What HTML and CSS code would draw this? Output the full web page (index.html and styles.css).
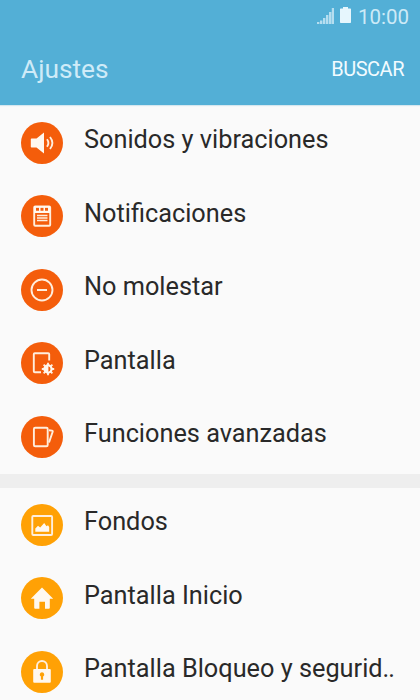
FILE: index.html
```html
<!DOCTYPE html>
<html lang="es">
<head>
    <meta charset="UTF-8">
    <meta name="viewport" content="width=device-width, initial-scale=1.0">
    <title>Ajustes</title>
    <link rel="stylesheet" href="styles.css">
</head>
<body>
    <header class="header">
        <div class="status-bar">
            <svg class="signal" width="17" height="16" viewBox="0 0 17 16">
                <path d="M0 14h2.400v2H0zM3 12.500h2.400V16H3zM6 10h2.400v6H6zM9 7h2.400v9H9zM12 4h2.400v12H12zM14.800 0H17v16h-2.200z"/>
            </svg>
            <svg class="battery" width="11" height="17" viewBox="0 0 11 17">
                <path d="M3 0h5v1.400h2.300q.7 0 .7.7v13.200q0 .7-.7.7H.7q-.7 0-.7-.7V2.100q0-.7.7-.7H3z"/>
            </svg>
            <span class="clock">10:00</span>
        </div>
        <div class="action-bar">
            <h1 class="title">Ajustes</h1>
            <button type="button" class="search-btn">BUSCAR</button>
        </div>
    </header>

    <main>
        <ul class="group device">
            <li class="item">
                <svg class="icon" viewBox="0 0 42 42">
                    <path class="fill" d="M10.500 16.500h5l7.500-6v21l-7.500-6h-5q-.7 0-.7-.7v-7.600q0-.7.7-.7z"/>
                    <path class="line" d="M26 17.300q2.800 3.700 0 7.400M29 15q4.800 6 0 12"/>
                </svg>
                <span class="label">Sonidos y vibraciones</span>
            </li>
            <li class="item">
                <svg class="icon" viewBox="0 0 42 42">
                    <rect class="line" x="13.200" y="11.500" width="16" height="19.200" rx="1"/>
                    <path class="fill" fill-rule="evenodd" d="M13 11h16v7H13zM15 12.800v3H18V12.800zM19.500 12.800v3h3v-3zM24 12.800v3h3v-3z"/>
                    <path class="thin" d="M16 20.500h10.500M16 23h10.500M16 25.500h10.500"/>
                </svg>
                <span class="label">Notificaciones</span>
            </li>
            <li class="item">
                <svg class="icon" viewBox="0 0 42 42">
                    <circle class="line" cx="21" cy="21" r="10.500"/>
                    <path class="line" d="M16 21h10"/>
                </svg>
                <span class="label">No molestar</span>
            </li>
            <li class="item">
                <svg class="icon" viewBox="0 0 42 42">
                    <path class="line" d="M20 30.200h-6.200q-1 0-1-1V12.300q0-1 1-1h13.400q1 0 1 1V18.500"/>
                    <path class="line" d="M27 20.800v2.500M27 30.700v2.500M20.800 27h2.500M30.700 27h2.500M22.600 22.600l1.700 1.700M29.700 29.700l1.700 1.700M22.600 31.400l1.700-1.700M29.700 24.300l1.700-1.700"/>
                    <path class="fill" fill-rule="evenodd" d="M27 22.300a4.700 4.700 0 1 0 0 9.400a4.700 4.700 0 1 0 0-9.400zM27.400 24.200v5.600a2.900 2.900 0 0 0 0-5.600z"/>
                </svg>
                <span class="label">Pantalla</span>
            </li>
            <li class="item">
                <svg class="icon" viewBox="0 0 42 42">
                    <rect class="line" x="12.900" y="11.800" width="13.800" height="18.400" rx="1.300"/>
                    <path class="line" d="M28 14.200l3 .4q1 .2.7 1.100L28 26.500"/>
                </svg>
                <span class="label">Funciones avanzadas</span>
            </li>
        </ul>

        <ul class="group personal">
            <li class="item">
                <svg class="icon" viewBox="0 0 42 42">
                    <rect class="line" x="11.300" y="12" width="19.800" height="19" rx="1"/>
                    <path class="fill" d="M14.300 27.800v-3.300l2.700-2.800 2.200 1.700 4-4.400 2.300 3.200 1.500-1 1.200 1.800v4.800z"/>
                </svg>
                <span class="label">Fondos</span>
            </li>
            <li class="item">
                <svg class="icon" viewBox="0 0 42 42">
                    <path class="fill" d="M21 10.500l11.200 11.200h-3.400v9q0 1-1 1H24v-7h-5.600v7h-4.200q-1 0-1-1v-9H9.800z"/>
                </svg>
                <span class="label">Pantalla Inicio</span>
            </li>
            <li class="item">
                <svg class="icon" viewBox="0 0 42 42">
                    <path class="line" d="M16 18.500v-3.500a5 5 0 0 1 10 0v3.500"/>
                    <path class="fill" fill-rule="evenodd" d="M13.200 18h15.600q1 0 1 1v11.800q0 1-1 1H13.200q-1 0-1-1V19q0-1 1-1zM21 21.200a2.300 2.300 0 0 0-1.100 4.300v3.200h2.200v-3.200A2.300 2.300 0 0 0 21 21.200z"/>
                </svg>
                <span class="label">Pantalla Bloqueo y segurid<span class="dots">..</span></span>
            </li>
        </ul>
    </main>
</body>
</html>
```

FILE: styles.css
```css
:root {
    --bar: #53afd6;
    --page: #fafafa;
    --divider: #eeeeee;
    --orange: #f45d0b;
    --amber: #ffa105;
    --text: #292929;
}

* {
    margin: 0;
    padding: 0;
    box-sizing: border-box;
}

body {
    height: 700px;
    font-family: Roboto, sans-serif;
    background-color: var(--page);
    color: var(--text);
    overflow: hidden;
}

.header {
    height: 105px;
    background-color: var(--bar);
    box-shadow: 0 1px 1px #d5e7ef;
}

.status-bar {
    display: flex;
    justify-content: flex-end;
    height: 33px;
    padding: 7px 11px 0 0;
    color: #cdeaf7;
}

.signal {
    margin: 1px 6px 0 0;
    fill: #b5def0;
}

.battery {
    margin-right: 7px;
    fill: #e6f6fd;
}

.clock {
    font-size: 20.5px;
    line-height: 20px;
}

.action-bar {
    display: flex;
    align-items: center;
    justify-content: space-between;
    height: 72px;
    padding: 0 16px 0 21px;
}

.title {
    font-size: 26.3px;
    font-weight: 400;
    color: #cfebf8;
}

.search-btn {
    border: none;
    background: none;
    font-family: inherit;
    font-size: 20px;
    letter-spacing: -0.5px;
    color: #f2fbff;
}

.group {
    list-style: none;
    padding-top: 1px;
}

.group + .group {
    border-top: 14px solid var(--divider);
    padding-top: 0.5px;
}

.item {
    display: flex;
    align-items: center;
    height: 73.5px;
    padding-left: 21px;
}

.icon {
    flex: none;
    width: 42px;
    height: 42px;
    margin-right: 21px;
    border-radius: 50%;
}

.device .icon {
    background-color: var(--orange);
}

.personal .icon {
    background-color: var(--amber);
}

.fill {
    fill: #fff8ef;
}

.line,
.thin {
    fill: none;
    stroke: #ffeedd;
    stroke-width: 1.9;
}

.thin {
    stroke-width: 1.3;
}

.label {
    padding-bottom: 5.5px;
    font-size: 25.3px;
    line-height: 30px;
    white-space: nowrap;
}

.dots {
    letter-spacing: -1px;
}
```
